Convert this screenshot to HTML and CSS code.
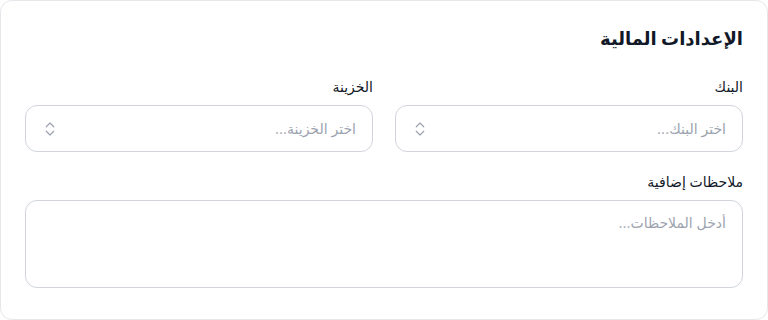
FILE: index.html
```html
<!DOCTYPE html>
<html lang="ar" dir="rtl">
<head>
  <meta charset="UTF-8" />
  <meta name="viewport" content="width=device-width, initial-scale=1.0"/>
  <title>الإعدادات المالية</title>
  <link rel="stylesheet" href="styles.css">
</head>
<body>

  <!-- Financial settings card -->
  <div class="card">
    <h2>الإعدادات المالية</h2>

    <div class="row">
      <div class="field">
        <label>البنك</label>
        <div class="select">
          <span class="placeholder">اختر البنك...</span>
          <svg class="chevrons" viewBox="0 0 24 24" fill="none" stroke="currentColor" stroke-width="2" stroke-linecap="round" stroke-linejoin="round"><path d="m7 15 5 5 5-5"/><path d="m7 9 5-5 5 5"/></svg>
        </div>
      </div>
      <div class="field">
        <label>الخزينة</label>
        <div class="select">
          <span class="placeholder">اختر الخزينة...</span>
          <svg class="chevrons" viewBox="0 0 24 24" fill="none" stroke="currentColor" stroke-width="2" stroke-linecap="round" stroke-linejoin="round"><path d="m7 15 5 5 5-5"/><path d="m7 9 5-5 5 5"/></svg>
        </div>
      </div>
    </div>

    <div class="field">
      <label for="notes">ملاحظات إضافية</label>
      <textarea id="notes" placeholder="أدخل الملاحظات..."></textarea>
    </div>
  </div>

</body>
</html>
```

FILE: styles.css
```css
* {
  margin: 0;
  padding: 0;
  box-sizing: border-box;
  font-family: Inter, "Noto Sans", "DejaVu Sans", sans-serif;
}
body {
  background-color: #fff;
}
.card {
  background-color: #fff;
  border: 1px solid #e5e7eb;
  border-radius: 12px;
  padding: 24px 24px 30px;
  height: 320px;
}
h2 {
  color: #111827;
  font-size: 18px;
  line-height: 28px;
  font-weight: 700;
  margin-bottom: 24px;
}
.row {
  display: grid;
  grid-template-columns: 1fr 1fr;
  gap: 22px;
  margin-bottom: 20px;
}
label {
  display: block;
  color: #111827;
  font-size: 14px;
  line-height: 20px;
  font-weight: 500;
  margin-bottom: 8px;
}
.select {
  height: 47px;
  border: 1px solid #d1d5db;
  border-radius: 12px;
  display: flex;
  align-items: center;
  justify-content: space-between;
  padding: 0 16px 0 15px;
}
.placeholder {
  color: #9ca3af;
  font-size: 14px;
}
.chevrons {
  color: #9ca3af;
  width: 18px;
  height: 18px;
  stroke-width: 1.6;
}
textarea {
  display: block;
  width: 100%;
  height: 88px;
  border: 1px solid #d1d5db;
  border-radius: 12px;
  padding: 12px 16px;
  font-size: 14px;
  line-height: 20px;
  resize: none;
  outline: none;
}
textarea::placeholder {
  color: #9ca3af;
}
```
